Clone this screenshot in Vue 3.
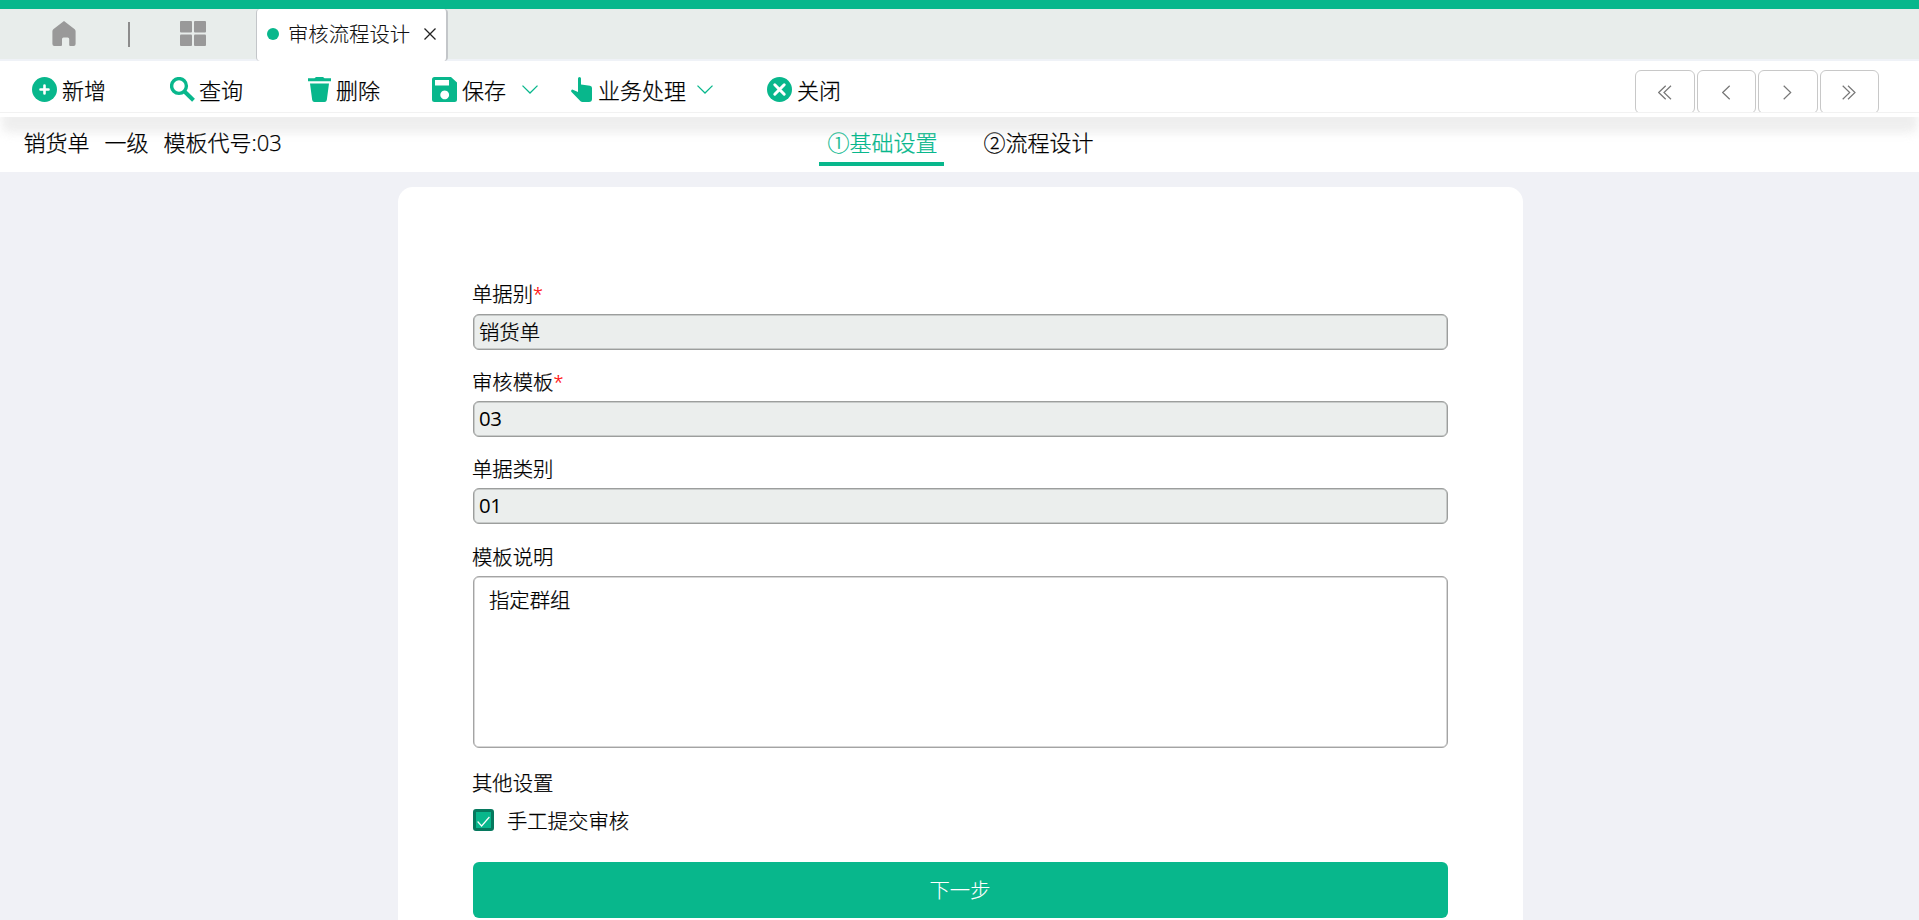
<script setup>
import { ref } from 'vue'

const actions = [
  { icon: 'add', label: '新增', cls: 'a-add' },
  { icon: 'search', label: '查询', cls: 'a-search' },
  { icon: 'trash', label: '删除', cls: 'a-trash' },
  { icon: 'save', label: '保存', cls: 'a-save', menu: true },
  { icon: 'hand', label: '业务处理', cls: 'a-hand', menu: true },
  { icon: 'close', label: '关闭', cls: 'a-close' }
]
const fields = [
  { label: '单据别', required: true, value: '销货单' },
  { label: '审核模板', required: true, value: '03' },
  { label: '单据类别', required: false, value: '01' }
]
const pagers = [
  'M13 .7 6 7.5l7 6.8M7.7 .7 .7 7.5l7 6.8',
  'M7.7 .7 .7 7.5l7 6.8',
  'M.7 .7l7 6.8-7 6.8',
  'M.7 .7l7 6.8-7 6.8M6 .7l7 6.8-7 6.8'
]
const note = ref('指定群组')
const steps = ['①基础设置', '②流程设计']
</script>

<template>
  <div class="page">
    <div class="accent"></div>
    <nav class="tabs">
      <svg class="home" width="24" height="25" viewBox="0 0 24 25"><path d="M12 0 22.7 8.2Q23.6 9 23.6 10.200V23q0 2-2 2h-3.400q-1 0-1-1v-6q0-1.500-1.500-1.500h-4.200q-1.500 0-1.500 1.500v6q0 1-1 1H2.400q-2 0-2-2V10.200Q.4 9 1.300 8.200Z" /></svg>
      <span class="divider"></span>
      <svg class="grid" width="26" height="25" viewBox="0 0 26 25"><rect width="12" height="11.500" rx="1" /><rect x="14" width="12" height="11.500" rx="1" /><rect y="13.500" width="12" height="11.500" rx="1" /><rect x="14" y="13.500" width="12" height="11.500" rx="1" /></svg>
      <div class="tab">
        <span class="dot"></span>
        <span class="tab-title">审核流程设计</span>
        <svg width="12" height="12" viewBox="0 0 12 12"><path d="M.5.5l11 11M11.500.5l-11 11" /></svg>
      </div>
    </nav>

    <div class="toolbar">
      <button v-for="a in actions" :key="a.icon" class="action" :class="a.cls">
        <svg v-if="a.icon === 'add'" width="25" height="25" viewBox="0 0 25 25"><circle cx="12.500" cy="12.500" r="12.500" /><path class="cut" d="M12.500 8.500v8M8.500 12.500h8" /></svg>
        <svg v-else-if="a.icon === 'search'" width="25" height="25" viewBox="0 0 25 25"><circle class="ring" cx="9" cy="9" r="7.400" /><path class="ring handle" d="M14.500 14.500 23.500 23.300" /></svg>
        <svg v-else-if="a.icon === 'trash'" width="23" height="25" viewBox="0 0 23 25"><path d="M0 1.200h6.500L8 0h7l1.500 1.200H23v3H0ZM2 6.500h19l-2.200 16.500q-.3 2-2.300 2h-10q-2 0-2.300-2Z" /></svg>
        <svg v-else-if="a.icon === 'save'" width="25" height="25" viewBox="0 0 25 25"><path fill-rule="evenodd" d="M2.500 0H19l6 5.500v17q0 2.500-2.500 2.500h-20Q0 25 0 22.500v-20Q0 0 2.500 0ZM3 3v5.500h14V3ZM12.700 13.500a4.400 4.400 0 1 0 .01 0Z" /></svg>
        <svg v-else-if="a.icon === 'hand'" width="21" height="25" viewBox="0 0 21 25"><path d="M7 1.500a1.500 1.500 0 0 1 3 0V7.500l9 1.200q2 .4 2 2.300V22q0 3-3 3H11.500q-1.200 0-2-.8L.3 14.800q-.6-1.500 1-2.200L7 15Z" /></svg>
        <svg v-else width="25" height="25" viewBox="0 0 25 25"><circle cx="12.500" cy="12.500" r="12.500" /><path class="cut x" d="M7.800 7.800l9.400 9.400M17.200 7.800l-9.400 9.400" /></svg>
        <span class="action-text">{{ a.label }}</span>
        <svg v-if="a.menu" class="chev" width="16" height="9" viewBox="0 0 16 9"><path d="M.5.6 8 8 15.500.6" /></svg>
      </button>
      <div class="pager">
        <button v-for="(d, i) in pagers" :key="i">
          <svg :width="i === 0 || i === 3 ? 14 : 9" height="15"><path :d="d" /></svg>
        </button>
      </div>
    </div>

    <header class="subhead">
      <div class="crumbs"><span>销货单</span><span>一级</span><span>模板代号:<i class="num">03</i></span></div>
      <div class="steps">
        <span v-for="(s, i) in steps" :key="s" class="step" :class="{ active: i === 0 }">{{ s }}</span>
      </div>
    </header>

    <main class="content">
      <form class="card" @submit.prevent>
        <div v-for="f in fields" :key="f.label" class="field">
          <label>{{ f.label }}<em v-if="f.required">*</em></label>
          <div class="input">{{ f.value }}</div>
        </div>
        <div class="field">
          <label>模板说明</label>
          <div class="area">{{ note }}</div>
        </div>
        <div class="other">其他设置</div>
        <div class="check">
          <span class="box"><svg width="13" height="12" viewBox="0 0 13 12"><path d="M.6 5.500 4.600 10 12.400 1" /></svg></span>
          <span>手工提交审核</span>
        </div>
        <button class="next">下一步</button>
      </form>
    </main>
  </div>
</template>

<style>
body { margin: 0; overflow: hidden; }
</style>

<style scoped>
* { box-sizing: border-box; }
.page {
  height: 920px;
  overflow: hidden;
  display: flex;
  flex-direction: column;
  background: #f0f1f6;
  color: #000;
  font-family: "Open Sans", "Noto Sans CJK SC", sans-serif;
  font-weight: 300;
  font-size: 20.35px;
  -webkit-text-stroke: .25px currentColor;
}
svg { display: block; flex: none; }
button {
  border: 0;
  padding: 0;
  background: none;
  font: inherit;
  color: inherit;
}
.accent { height: 9px; flex: none; background: #08b78c; }
.tabs {
  height: 52px;
  flex: none;
  display: flex;
  background: #e8edeb;
  border-bottom: 2px solid #eff2f7;
}
.home { margin: 12px 0 0 52px; fill: #999; }
.divider { width: 2px; height: 25px; margin: 13px 0 0 52px; background: #8c8c8c; }
.grid { margin: 12px 0 0 50px; fill: #999; }
.tab {
  width: 192px;
  height: 52px;
  margin-left: 50px;
  padding: 0 0 2px 10px;
  display: flex;
  align-items: center;
  background: #fff;
  border: solid #c3c6c9;
  border-width: 0 2px 0 1px;
  border-radius: 4px;
}
.dot { width: 12px; height: 12px; border-radius: 50%; background: #08b78c; }
.tab-title { margin: 0 14px 2px 9px; white-space: nowrap; color: #111; -webkit-text-stroke-width: .1px; }
.tab path { stroke: #222; stroke-width: 1.3; fill: none; }
.toolbar {
  height: 56px;
  flex: none;
  display: flex;
  background: linear-gradient(#fff 51px, #f2f2f2 51px, #f2f2f2 52px, #fff 52px);
}
.action {
  height: 25px;
  margin-top: 16px;
  display: flex;
  align-items: center;
  font-size: 22px;
  white-space: nowrap;
}
.action svg { fill: #08b78c; }
.action-text { margin: 1px 0 0 5px; line-height: 30px; }
.cut { stroke: #fff; stroke-width: 2.600; stroke-linecap: round; }
.cut.x { stroke-width: 3; }
.ring { fill: none; stroke: #08b78c; stroke-width: 3.400; }
.handle { stroke-width: 4; }
.a-add { margin-left: 32px; }
.a-search { margin-left: 64px; }
.a-search .action-text { margin-left: 4px; }
.a-trash { margin-left: 65px; }
.a-trash .action-text { margin-left: 5px; }
.a-save { margin-left: 52px; }
.a-hand { margin-left: 33px; }
.a-hand .action-text { margin-left: 6px; }
.a-close { margin-left: 54px; }
.action .chev { margin-left: 16px; fill: none; stroke: #08b78c; stroke-width: 1.300; }
.action.a-hand .chev { margin-left: 11px; }
.pager {
  height: 42px;
  margin: 9px 40px 0 auto;
  display: flex;
  gap: 2px;
  overflow: hidden;
}
.pager button {
  width: 59.500px;
  height: 44px;
  display: flex;
  align-items: center;
  justify-content: center;
  border: 1px solid #c8c8c8;
  border-radius: 6px;
}
.pager path { fill: none; stroke: #777; stroke-width: 1.200; }
.subhead {
  height: 55px;
  flex: none;
  display: flex;
  align-items: flex-start;
  position: relative;
  overflow: hidden;
  background: #fff;
  font-size: 22px;
}
.subhead::before {
  content: "";
  position: absolute;
  left: 5px;
  right: 5px;
  top: -6px;
  height: 18px;
  box-shadow: 0 0 10px 2px #e4e4e4;
  background: #ebebeb;
  filter: blur(3px);
  opacity: .8;
}
.crumbs {
  width: 819px;
  padding-left: 23.5px;
  display: flex;
  gap: 15px;
  position: relative;
  line-height: 51px;
}
.num { font-style: normal; letter-spacing: -.2px; }
.steps { display: flex; gap: 31px; position: relative; }
.step { width: 125px; height: 49px; padding-left: 2px; line-height: 51px; text-align: center; white-space: nowrap; }
.step.active { color: #08b78c; border-bottom: 4px solid #08b78c; }
.content { flex: 1; min-height: 0; padding: 15px 396px 0 398px; }
.card {
  height: 760px;
  padding: 87px 75px 0;
  background: #fff;
  border-radius: 15px;
}
.field { margin-bottom: 11px; }
.field label { display: block; height: 40px; margin-left: -1px; line-height: 41px; }
.field:nth-child(2) label, .field:nth-child(3) label { line-height: 42px; }
.field:nth-child(4) label { height: 41px; line-height: 44px; }
.field em { color: #f00; font-style: normal; font-size: 18px; line-height: 1; vertical-align: 1px; }
.input {
  height: 36px;
  padding-left: 5px;
  line-height: 33px;
  background: #ebeeed;
  border: 1px solid #9c9e9d;
  box-shadow: inset 0 0 0 .5px #a6a8a7;
  border-radius: 6px;
  font-weight: 400;
  letter-spacing: -.3px;
  -webkit-text-stroke-width: 0;
}
.field:nth-child(1) .input {
  line-height: 35px;
  font-weight: 300;
  letter-spacing: 0;
  -webkit-text-stroke-width: .25px;
}
.area {
  height: 172px;
  padding: 7px 15px;
  line-height: 32px;
  border: 1px solid #a4a4a4;
  box-shadow: inset 0 0 0 .5px #b0b0b0;
  border-radius: 6px;
}
.other { height: 50px; margin-left: -1px; line-height: 48px; }
.check { height: 22px; display: flex; align-items: center; gap: 13px; }
.box {
  width: 21px;
  height: 22px;
  display: flex;
  align-items: flex-end;
  justify-content: center;
  background: #08b78c;
  border: 3px solid #06795e;
  border-radius: 3px;
}
.box path { fill: none; stroke: #fff; stroke-width: 1.200; }
.next {
  width: 100%;
  height: 56px;
  margin-top: 31px;
  padding: 0 1px 2px 0;
  background: #08b78c;
  border-radius: 6px;
  color: #fff;
  -webkit-text-stroke-width: .1px;
}
</style>
